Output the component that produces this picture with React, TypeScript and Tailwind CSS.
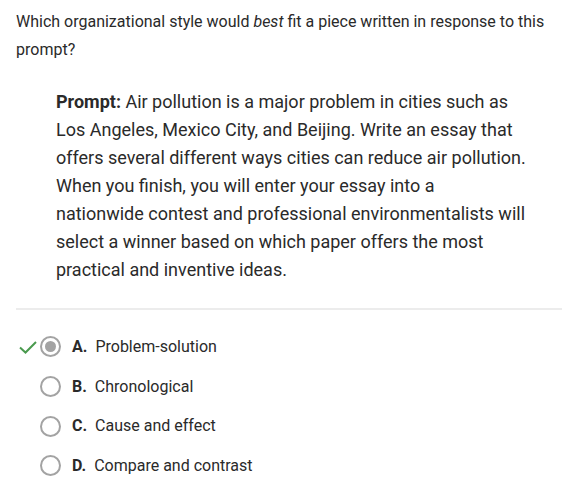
import React from "react";

const options = [
  { l: "A.", t: "Problem-solution", sel: true },
  { l: "B.", t: "Chronological", sel: false },
  { l: "C.", t: "Cause and effect", sel: false },
  { l: "D.", t: "Compare and contrast", sel: false },
];

export default function App() {
  return (
    <div className="w-[562px] h-[481px] bg-white text-[#2a2a2a] overflow-hidden" style={{ fontFamily: "Roboto, 'Liberation Sans', sans-serif" }}>
      <div className="pl-4 pt-2 text-[16px] leading-[28px] whitespace-nowrap">
        Which organizational style would <i>best</i> fit a piece written in response to this
        <br />
        prompt?
      </div>
      <div className="pl-14 mt-6 text-[18px] leading-[28px] whitespace-nowrap">
        <b>Prompt:</b> Air pollution is a major problem in cities such as
        <br />
        Los Angeles, Mexico City, and Beijing. Write an essay that
        <br />
        offers several different ways cities can reduce air pollution.
        <br />
        When you finish, you will enter your essay into a
        <br />
        nationwide contest and professional environmentalists will
        <br />
        select a winner based on which paper offers the most
        <br />
        practical and inventive ideas.
      </div>
      <div className="ml-4 mt-6 h-[2px] bg-[#ececec]" />
      <div className="mt-[17px] flex flex-col">
        {options.map((o) => (
          <div key={o.l} className="h-[39.7px] flex items-center">
            <div className="w-[40px] flex justify-end pr-[2px]">
              {o.sel && (
                <svg width="20" height="16" viewBox="0 0 20 16">
                  <path d="M2 8.5 L7.5 13.5 L18 3" fill="none" stroke="#4a9a4e" strokeWidth="2" />
                </svg>
              )}
            </div>
            <div className="w-[21px] h-[21px] rounded-full border-2 border-[#a3a3a3] flex items-center justify-center">
              {o.sel && <div className="w-[11px] h-[11px] rounded-full bg-[#a3a3a3]" />}
            </div>
            <span className="ml-[11px] font-bold text-[16px]">{o.l}</span>
            <span className="ml-[8px] text-[16px]">{o.t}</span>
          </div>
        ))}
      </div>
    </div>
  );
}
